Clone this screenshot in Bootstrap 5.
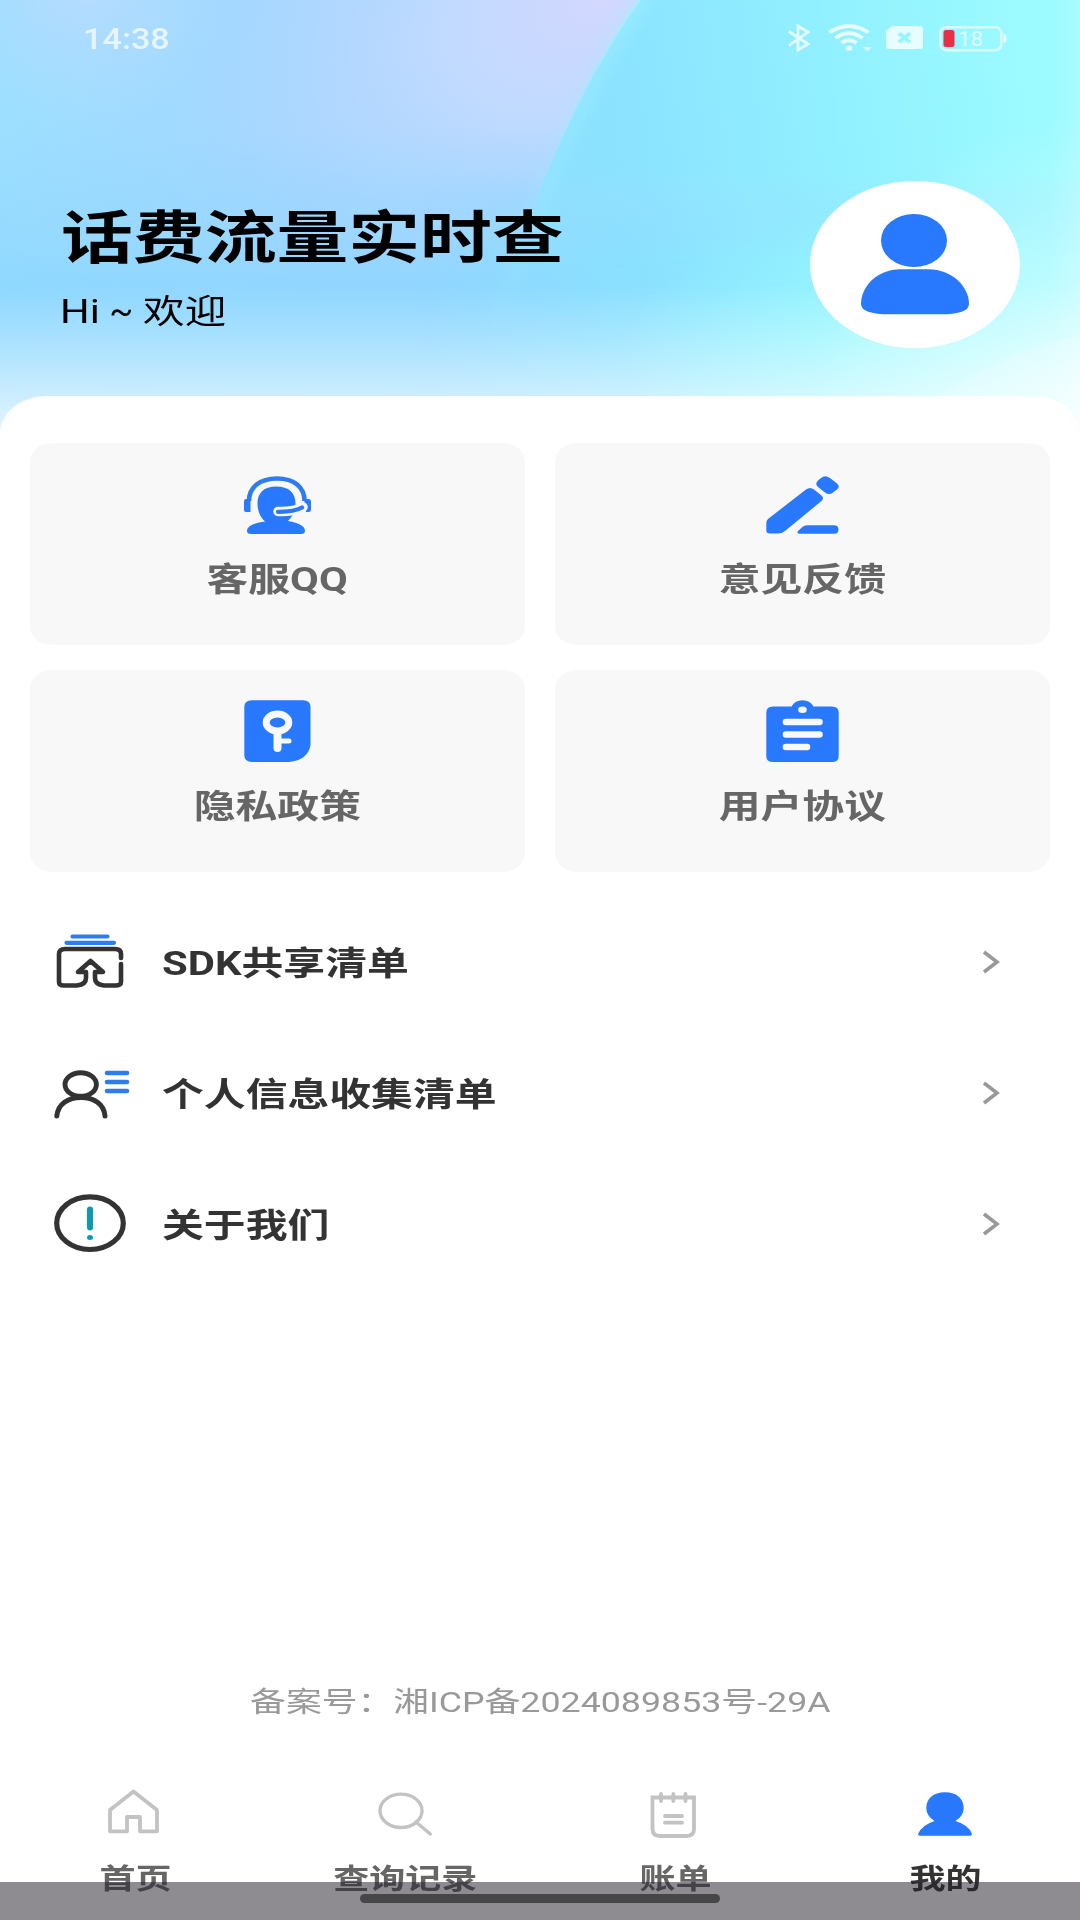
<!DOCTYPE html>
<html lang="zh-CN">
<head>
<meta charset="utf-8">
<meta name="viewport" content="width=device-width, initial-scale=1">
<title>我的</title>
<link href="https://cdn.jsdelivr.net/npm/bootstrap@5.3.0/dist/css/bootstrap.min.css" rel="stylesheet">
<style>
body{font-family:Roboto,"Noto Sans CJK SC",sans-serif;background:#fff;color:#000}
.phone{width:1080px;height:1920px}
.hero{height:431px}
.hero-art{z-index:0}
.status{height:62px;padding:0 70px 0 83px}
.clock{font-size:30px;font-weight:500;line-height:62px;color:rgba(255,255,255,.72);padding-top:8px}
.wide{display:inline-block;transform:scaleX(1.26);white-space:nowrap}
.wide-start{transform-origin:0 50%}
.clock.wide{transform:scaleX(1.14)}
.profile{padding:119px 60px 0 61px}
.app-title{font-size:57px;line-height:76px;font-weight:700;margin:20px 0 0}
.hello{font-size:33px;line-height:48px;margin:11px 0 0 -1px;word-spacing:-1px}
.tilde{display:inline-block;width:20px;transform:scaleX(.85);transform-origin:0 50%}
.avatar{width:210px;height:167px;border-radius:50%}
.sheet{margin-top:-35px;border-radius:46px 46px 0 0/38px 38px 0 0;padding-top:47px}
.tiles{padding:0 30px;display:grid;grid-template-columns:1fr 1fr;gap:25px 30px}
.tile{height:202px;border-radius:22px/19px;background:#f8f8f8;padding-top:28px;color:#666}
.tile-label{font-size:33.2px;line-height:48px;font-weight:700;margin-top:19px}
.entry{height:131px;padding:0 80px 0 54px;color:#333}
.entry-label{font-size:33.2px;line-height:48px;font-weight:700;margin:4px 0 0 32px}
.entries{margin-top:24px}
.record{font-size:28.4px;line-height:40px;color:#999;margin-bottom:59px}
.tab{color:#666;flex:1 1 0}
.tab.active{color:#333}
.tab-label{font-size:28.6px;line-height:40px;font-weight:700;margin:17px 0 0 1px}
.tabs{height:138px}
.sysbar{height:38px;background:rgba(36,32,42,.516);z-index:3}
.homebar{width:360px;height:9px;border-radius:5px;background:#464648;margin-top:12px}
</style>
<script src="https://cdn.jsdelivr.net/npm/bootstrap@5.3.0/dist/js/bootstrap.bundle.min.js"></script>
</head>
<body>
<div class="phone d-flex flex-column position-relative overflow-hidden">
  <header class="hero position-relative flex-shrink-0">
    <svg class="hero-art position-absolute top-0 start-0" width="1080" height="431" viewBox="0 0 1080 431" aria-hidden="true">
      <defs>
        <linearGradient id="base" x1="0" y1="0" x2="1" y2="0"><stop offset="0" stop-color="#9cdfff"/><stop offset=".3" stop-color="#a6d5ff"/><stop offset=".6" stop-color="#a8d8ff"/></linearGradient>
        <radialGradient id="lav" gradientUnits="userSpaceOnUse" cx="0" cy="0" r="1" gradientTransform="translate(600 0) rotate(-22) scale(430 270)"><stop offset="0" stop-color="#d3d8ff"/><stop offset=".4" stop-color="#c4daff" stop-opacity=".85"/><stop offset="1" stop-color="#b0d8ff" stop-opacity="0"/></radialGradient>
        <radialGradient id="lav2" gradientUnits="userSpaceOnUse" cx="85" cy="-20" r="150"><stop offset="0" stop-color="#b8dcff"/><stop offset="1" stop-color="#b0dcff" stop-opacity="0"/></radialGradient>
        <linearGradient id="low" x1="0" y1="0" x2="0" y2="1"><stop offset=".3" stop-color="#8ed6ff" stop-opacity="0"/><stop offset=".55" stop-color="#8ed6ff" stop-opacity=".45"/><stop offset=".7" stop-color="#8ad6ff" stop-opacity=".9"/><stop offset="1" stop-color="#8ad7ff"/></linearGradient>
        <linearGradient id="cy" gradientUnits="userSpaceOnUse" x1="530" y1="180" x2="1040" y2="100"><stop offset="0" stop-color="#8ce0ff"/><stop offset=".2" stop-color="#8be3ff"/><stop offset=".6" stop-color="#91f0ff"/><stop offset="1" stop-color="#9bfbff"/></linearGradient>
        <linearGradient id="right" x1="0" y1="0" x2="1" y2="0"><stop offset="0" stop-color="#8adcff" stop-opacity="0"/><stop offset=".3" stop-color="#8adfff"/><stop offset=".65" stop-color="#92f2ff"/><stop offset="1" stop-color="#9cfcff"/></linearGradient>
        <linearGradient id="msk" x1="0" y1="0" x2="0" y2="1"><stop offset=".4" stop-color="#fff"/><stop offset=".7" stop-color="#fff" stop-opacity="0"/></linearGradient>
        <linearGradient id="msk2" x1="0" y1="0" x2="0" y2="1"><stop offset=".4" stop-color="#fff" stop-opacity="0"/><stop offset=".6" stop-color="#fff"/></linearGradient>
        <linearGradient id="edge" x1="0" y1="0" x2="0" y2="1"><stop offset="0" stop-color="#a2f0ff"/><stop offset=".5" stop-color="#9eeaff" stop-opacity=".6"/><stop offset=".8" stop-color="#9eeaff" stop-opacity="0"/></linearGradient>
        <linearGradient id="fade" x1="0" y1="0" x2="0" y2="1"><stop offset=".66" stop-color="#fff" stop-opacity="0"/><stop offset=".78" stop-color="#fff" stop-opacity=".24"/><stop offset=".92" stop-color="#fff" stop-opacity=".56"/><stop offset="1" stop-color="#fff" stop-opacity=".75"/></linearGradient>
        <radialGradient id="glow" gradientUnits="userSpaceOnUse" cx="0" cy="0" r="1" gradientTransform="translate(950 350) scale(330 140)"><stop offset="0" stop-color="#a0fcff" stop-opacity=".8"/><stop offset="1" stop-color="#98f6ff" stop-opacity="0"/></radialGradient>
        <radialGradient id="corner" gradientUnits="userSpaceOnUse" cx="1100" cy="400" r="290"><stop offset="0" stop-color="#f0ffff" stop-opacity=".8"/><stop offset="1" stop-color="#d8ffff" stop-opacity="0"/></radialGradient>
        <linearGradient id="rim" x1="0" y1="0" x2="1" y2="0"><stop offset="0" stop-color="#fff" stop-opacity="0"/><stop offset="1" stop-color="#fff" stop-opacity=".15"/></linearGradient>
        <filter id="soft" x="-20%" y="-20%" width="140%" height="140%"><feGaussianBlur stdDeviation="7"/></filter>
        <mask id="m"><rect width="1080" height="431" fill="url(#msk)"/></mask>
        <mask id="m2"><rect width="1080" height="431" fill="url(#msk2)"/></mask>
      </defs>
      <rect width="1080" height="431" fill="url(#base)"/>
      <rect width="700" height="431" fill="url(#lav)"/>
      <rect width="300" height="200" fill="url(#lav2)"/>
      <rect width="1080" height="431" fill="url(#low)"/>
      <g mask="url(#m2)"><rect x="420" y="150" width="660" height="281" fill="url(#right)"/></g>
      <path mask="url(#m)" d="M640 0C600 55 560 135 535 205C510 275 480 330 465 431H1080V0Z" fill="url(#cy)"/>
      <rect width="1080" height="431" fill="url(#glow)"/>
      <path d="M646 -5C606 55 566 135 541 205C516 275 486 330 471 431" fill="none" stroke="url(#edge)" stroke-width="13" opacity=".6" filter="url(#soft)"/>
      <path d="M640 0C600 55 560 135 535 205" fill="none" stroke="url(#edge)" stroke-width="2"/>
      <rect width="1080" height="431" fill="url(#corner)"/>
      <rect x="1050" width="30" height="431" fill="url(#rim)"/>
      <rect width="1080" height="431" fill="url(#fade)"/>
      <path d="M930 398Q985 370 1020 352L1080 335V431H930Z" fill="#fff" opacity=".17"/>
    </svg>
    <div class="status d-flex justify-content-between position-relative">
      <span class="clock wide wide-start">14:38</span>
      <svg width="230" height="62" viewBox="780 0 230 62" fill="none" stroke="#fff" stroke-opacity=".78">
        <path d="M789 31.500L808 44L798 50V26L808 32L789 45.500" stroke-width="2.700"/>
        <path d="M829.500 32.500Q849 19.500 868.500 32.500M835.500 38Q849 28.500 862.500 38M841.500 43Q849 37.500 856.500 43" stroke-width="3.800"/>
        <g stroke="none" fill="#fff" fill-opacity=".78"><ellipse cx="849" cy="48" rx="3.300" ry="2.600"/><path d="M863 47h9l-4.500 4z"/>
        <path fill-rule="evenodd" d="M892 26h28q3 0 3 3v17q0 3-3 3h-31q-3 0-3-3V31zM897.500 34.500l4 3.200l-4 3.300l3 2.500l4-3.300l4 3.300l3-2.500l-4-3.300l4-3.200l-3-2.500l-4 3.300l-4-3.300z"/>
        <path d="M1003.500 34q3 0 3 4.500t-3 4.500z"/></g>
        <rect x="940.300" y="27.200" width="61" height="23" rx="6" stroke-width="2.500" stroke-opacity=".65"/>
        <rect x="943.500" y="30" width="11" height="17" rx="2.500" fill="#ea2f45" stroke="none"/>
        <text x="958" y="45.500" font-size="20" textLength="25" lengthAdjust="spacingAndGlyphs" fill="#fff" fill-opacity=".72" stroke="none" font-family="Roboto, sans-serif">18</text>
      </svg>
    </div>
    <div class="profile d-flex justify-content-between position-relative">
      <div>
        <h1 class="app-title"><span class="wide wide-start">话费流量实时查</span></h1>
        <div class="hello"><span class="wide wide-start">Hi <span class="tilde">~</span> 欢迎</span></div>
      </div>
      <div class="avatar bg-white">
        <svg class="d-block" width="210" height="167" viewBox="810 181 210 167" fill="#2979ff"><ellipse cx="914" cy="240.500" rx="33" ry="26.500"/><path d="M900 269.300H929C951 269.300 969 286 969 304Q969 314.300 940 314.300H890Q861 314.300 861 304C861 286 878 269.300 900 269.300Z"/></svg>
      </div>
    </div>
  </header>

  <main class="sheet bg-white position-relative flex-grow-1 d-flex flex-column">
    <section class="tiles">
      <a class="tile d-flex flex-column align-items-center text-decoration-none">
        <svg width="84" height="66" viewBox="236 471 84 66" fill="#2979ff">
          <path d="M249 501C249 487 260 478.500 277 478.500S304.500 487 304.500 501" fill="none" stroke="#2f7cee" stroke-width="4.600"/>
          <path d="M246 499h4.500v13H246q-2 0-2-2v-8q0-3 2-3zM304 499h4.500q2.500 0 2.500 3v8q0 2-2.500 2H306z"/>
          <path d="M276 486.500C289 486.500 295.500 493 295.500 503C295.500 512 292 517 288 521Q305 524 305 531Q305 534 301 534H251Q247 534 247 531Q247 524 265 521.500C260 517 257.500 511 257.500 503C257.500 493 264 486.500 276 486.500Z"/>
          <path d="M303 507Q294 512 278 511.500" fill="none" stroke="#f8f8f8" stroke-width="9.500" stroke-linecap="round"/>
          <path d="M302 507.500Q294 512 278 511.800" fill="none" stroke="#2979ff" stroke-width="4.300" stroke-linecap="round"/>
        </svg>
        <span class="tile-label wide">客服QQ</span>
      </a>
      <a class="tile d-flex flex-column align-items-center text-decoration-none">
        <svg width="84" height="66" viewBox="761 471 84 66" fill="#2979ff">
          <path d="M768 519L806 489.500Q810 486.500 814 489.500L821.500 495.500Q824.500 498 821.500 501L785 531Q782 533.500 778 533.500H770Q766.300 533.500 766.300 530.500V523Q766.300 520.500 768 519Z"/>
          <path d="M818 480.500L821 478Q825 474.500 830 478L837 483.500Q840.500 486.500 837 489.500L833 492.500Q829 495.500 825 492.500L818 487Q814.500 484 818 480.500Z"/>
          <path d="M803 526.500Q805 525.200 808 525.200H834Q838.500 525.200 838.500 529.500T834 533.700H799Q796.500 533.200 798 531Z"/>
        </svg>
        <span class="tile-label wide">意见反馈</span>
      </a>
      <a class="tile d-flex flex-column align-items-center text-decoration-none">
        <svg width="84" height="66" viewBox="236 698 84 66" fill="none">
          <path d="M252 700.300H303Q310.500 700.300 310.500 707V745Q308 760 289 762H252Q244.300 762 244.300 755V707Q244.300 700.300 252 700.300Z" fill="#2979ff"/>
          <ellipse cx="277.500" cy="722.500" rx="11.300" ry="8.500" stroke="#f8f8ff" stroke-width="7"/>
          <path d="M277.500 732V748" stroke="#f8f8ff" stroke-width="8" stroke-linecap="round"/><path d="M280 741H289" stroke="#f8f8ff" stroke-width="5" stroke-linecap="round"/>
        </svg>
        <span class="tile-label wide">隐私政策</span>
      </a>
      <a class="tile d-flex flex-column align-items-center text-decoration-none">
        <svg width="84" height="66" viewBox="761 698 84 66" fill="none">
          <path d="M773 706.500H791.500Q795 700.300 802.500 700.300T813.500 706.500H832Q838.700 706.500 838.700 712.500V756Q838.700 762 832 762H773Q766.300 762 766.300 756V712.500Q766.300 706.500 773 706.500Z" fill="#2979ff"/>
          <ellipse cx="802.500" cy="709.700" rx="4.300" ry="3.300" fill="#f8f8ff"/>
          <path d="M786 722H819.500M786 734.500H819.500M786 747H807" stroke="#f8f8ff" stroke-width="6.600" stroke-linecap="round"/>
        </svg>
        <span class="tile-label wide">用户协议</span>
      </a>
    </section>

    <section class="entries">
      <a class="entry d-flex align-items-center text-decoration-none">
        <svg width="76" height="62" viewBox="0 0 76 62" fill="none" stroke-linecap="round" stroke-linejoin="round">
          <path d="M18.500 5.500H53.500M12.500 11.800H60" stroke="#2f7cee" stroke-width="4.200"/>
          <path d="M67 27V23Q67 18 61 18H11Q5 18 5 23V51Q5 54.500 10 54.500H23Q32 53.500 32 47V41H24L36.500 30L49 41H41V47Q41 53.500 50 54.500H61Q67 54.500 67 51V33" stroke="#333" stroke-width="4.600"/>
        </svg>
        <span class="entry-label wide wide-start">SDK共享清单</span>
        <svg class="ms-auto" width="18" height="24" viewBox="0 0 18 24" fill="none" stroke="#999" stroke-width="3.600"><path d="M2 2L15 12L2 22"/></svg>
      </a>
      <a class="entry d-flex align-items-center text-decoration-none">
        <svg width="76" height="62" viewBox="0 0 76 62" fill="none" stroke-linecap="round">
          <ellipse cx="26.700" cy="22.500" rx="15.700" ry="11.800" stroke="#333" stroke-width="4.900"/>
          <path d="M2.800 54C4 42 14 35.500 27 35.500S50 42 51 54" stroke="#333" stroke-width="5"/>
          <path d="M53 11H73M53 20H73M53 29H73" stroke="#2f7cee" stroke-width="4.600"/>
        </svg>
        <span class="entry-label wide wide-start">个人信息收集清单</span>
        <svg class="ms-auto" width="18" height="24" viewBox="0 0 18 24" fill="none" stroke="#999" stroke-width="3.600"><path d="M2 2L15 12L2 22"/></svg>
      </a>
      <a class="entry d-flex align-items-center text-decoration-none">
        <svg width="76" height="62" viewBox="0 0 76 62" fill="none" stroke-linecap="round">
          <ellipse cx="36" cy="30.200" rx="33.300" ry="26.300" stroke="#333" stroke-width="5.200"/>
          <path d="M36 16.500V34.500" stroke="#0a9bb0" stroke-width="6"/><ellipse cx="36" cy="44.500" rx="3" ry="2.500" fill="#0a9bb0"/>
        </svg>
        <span class="entry-label wide wide-start">关于我们</span>
        <svg class="ms-auto" width="18" height="24" viewBox="0 0 18 24" fill="none" stroke="#999" stroke-width="3.600"><path d="M2 2L15 12L2 22"/></svg>
      </a>
    </section>

    <div class="record text-center mt-auto"><span class="wide">备案号：湘ICP备2024089853号-29A</span></div>

    <nav class="tabs d-flex flex-shrink-0">
      <a class="tab d-flex flex-column align-items-center text-decoration-none">
        <svg width="60" height="60" viewBox="105 1782 60 60" fill="none" stroke="#c3c3c3" stroke-width="3.800" stroke-linejoin="round"><path d="M110 1831.300V1810L133.500 1791.500L157 1810V1831.300H140V1817H127V1831.300Z"/></svg>
        <span class="tab-label wide">首页</span>
      </a>
      <a class="tab d-flex flex-column align-items-center text-decoration-none">
        <svg width="60" height="60" viewBox="375 1782 60 60" fill="none" stroke="#c3c3c3" stroke-width="3.400" stroke-linecap="round"><ellipse cx="401" cy="1810.800" rx="21" ry="16.700"/><path d="M416 1822L430.300 1834"/></svg>
        <span class="tab-label wide">查询记录</span>
      </a>
      <a class="tab d-flex flex-column align-items-center text-decoration-none">
        <svg width="60" height="60" viewBox="645 1782 60 60" fill="none" stroke="#c3c3c3" stroke-width="3.800" stroke-linecap="round"><path d="M652.500 1797.500V1829Q652.500 1836 660 1836H686.500Q694 1836 694 1829V1797.500ZM661 1794V1801M673.300 1794V1801M685.500 1794V1801M665 1816H682M665 1822.700H682"/></svg>
        <span class="tab-label wide">账单</span>
      </a>
      <a class="tab active d-flex flex-column align-items-center text-decoration-none">
        <svg width="60" height="60" viewBox="915 1782 60 60" fill="#2979ff"><path d="M945 1792.300C957 1792.300 963.700 1799 963.700 1808Q963.700 1816 955.500 1821Q969 1825 972 1834Q972 1835.700 970 1835.700H920Q918 1835.700 918 1834Q922 1825 934.500 1821Q926.300 1816 926.300 1808C926.300 1799 933 1792.300 945 1792.300Z"/></svg>
        <span class="tab-label wide">我的</span>
      </a>
    </nav>
  </main>
  <div class="sysbar position-absolute bottom-0 start-0 w-100"><div class="homebar mx-auto"></div></div>
</div>
</body>
</html>
